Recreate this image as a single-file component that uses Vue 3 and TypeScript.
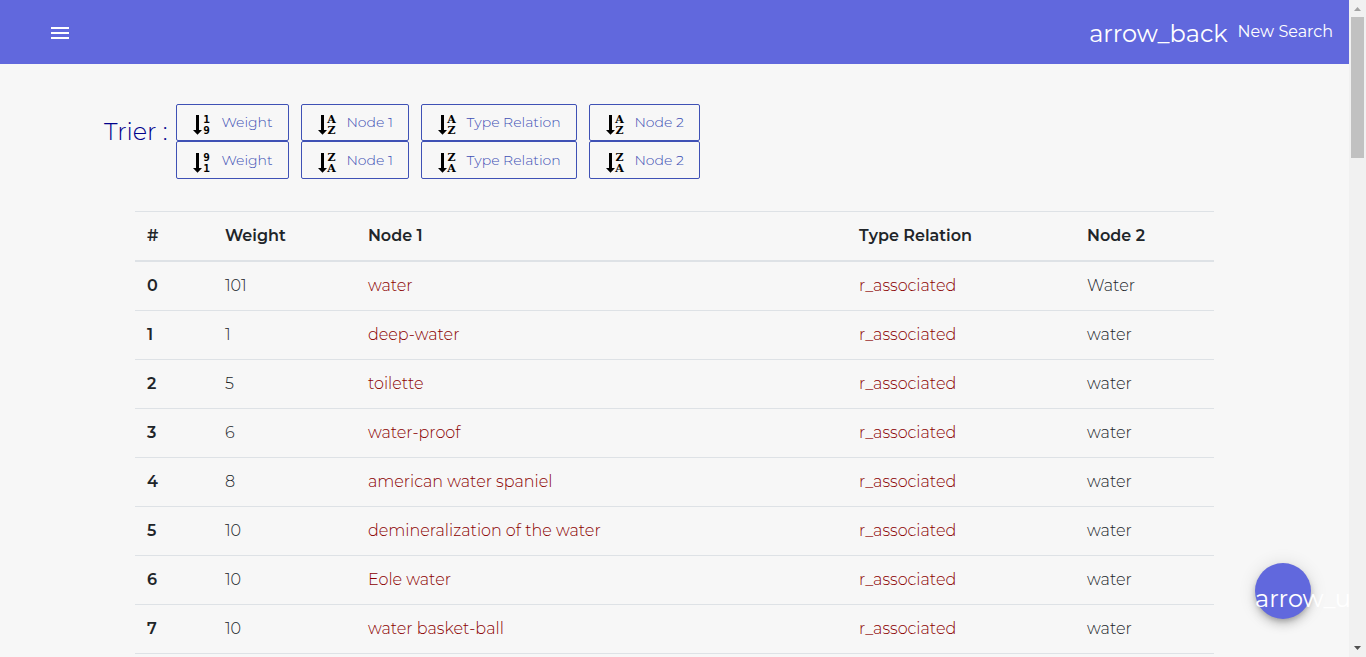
<script setup lang="ts">
interface Row {
  weight: number
  node1: string
  relation: string
  node2: string
}

interface SortButton {
  label: string
  first: string
  second: string
}

const columns: string[] = ['#', 'Weight', 'Node 1', 'Type Relation', 'Node 2']

const sorts: SortButton[] = [
  { label: 'Weight', first: '1', second: '9' },
  { label: 'Node 1', first: 'A', second: 'Z' },
  { label: 'Type Relation', first: 'A', second: 'Z' },
  { label: 'Node 2', first: 'A', second: 'Z' },
  { label: 'Weight', first: '9', second: '1' },
  { label: 'Node 1', first: 'Z', second: 'A' },
  { label: 'Type Relation', first: 'Z', second: 'A' },
  { label: 'Node 2', first: 'Z', second: 'A' },
]

const entries: [number, string, string][] = [
  [101, 'water', 'Water'],
  [1, 'deep-water', 'water'],
  [5, 'toilette', 'water'],
  [6, 'water-proof', 'water'],
  [8, 'american water spaniel', 'water'],
  [10, 'demineralization of the water', 'water'],
  [10, 'Eole water', 'water'],
  [10, 'water basket-ball', 'water'],
]

const rows: Row[] = entries.map(([weight, node1, node2]) => ({
  weight,
  node1,
  relation: 'r_associated',
  node2,
}))
</script>

<template>
  <div class="shell">
    <div class="page">
      <header class="bar">
        <button class="menu" type="button" aria-label="Menu">
          <svg width="24" height="24" viewBox="0 0 24 24" aria-hidden="true">
            <path d="M3 6h18v2H3zM3 11h18v2H3zM3 16h18v2H3z" fill="#fff" />
          </svg>
        </button>
        <a class="back" href="#">
          <span class="back-icon">arrow_back</span>
          <span class="back-label">New Search</span>
        </a>
      </header>

      <main>
        <section class="sorting">
          <h2>Trier :</h2>
          <div class="buttons">
            <button v-for="(s, i) in sorts" :key="i" class="sort" type="button">
              <svg width="18" height="22" viewBox="0 0 18 22" aria-hidden="true">
                <path d="M3 2h3v15h3L4.500 21.700 0 17h3z" />
                <text
                  x="13.500"
                  y="10"
                  :class="s.label === 'Weight' ? 'digit' : 'letter'"
                >{{ s.first }}</text>
                <text
                  x="13.500"
                  y="21"
                  :class="s.label === 'Weight' ? 'digit' : 'letter'"
                >{{ s.second }}</text>
              </svg>
              <span>{{ s.label }}</span>
            </button>
          </div>
        </section>

        <table>
          <thead>
            <tr>
              <th v-for="c in columns" :key="c" scope="col">{{ c }}</th>
            </tr>
          </thead>
          <tbody>
            <tr v-for="(r, i) in rows" :key="i">
              <th scope="row">{{ i }}</th>
              <td>{{ r.weight }}</td>
              <td><a href="#">{{ r.node1 }}</a></td>
              <td><a href="#">{{ r.relation }}</a></td>
              <td>{{ r.node2 }}</td>
            </tr>
          </tbody>
        </table>
      </main>

      <button class="fab" type="button">arrow_upward</button>
    </div>

    <div class="scroll" aria-hidden="true">
      <svg width="17" height="17" viewBox="0 0 17 17"><path d="M5 11h7L8.500 7z" fill="#a3a3a3" /></svg>
      <div class="track"><div class="thumb"></div></div>
      <svg width="17" height="17" viewBox="0 0 17 17"><path d="M5 6h7L8.500 10z" fill="#505050" /></svg>
    </div>
  </div>
</template>

<style>
body {
  margin: 0;
}
</style>

<style scoped>
.shell {
  display: flex;
  height: 100vh;
  overflow: hidden;
  background: #f7f7f7;
  color: #212529;
  font-family: Montserrat, Inter, "Open Sans", sans-serif;
  font-size: 16px;
  font-weight: 300;
  line-height: 24px;
}

.page {
  position: relative;
  flex: 1;
  min-width: 0;
  overflow: hidden;
}

button {
  font: inherit;
  cursor: pointer;
}

a {
  color: #8b0000;
  text-decoration: none;
}

.bar {
  display: flex;
  align-items: center;
  justify-content: space-between;
  height: 64px;
  padding: 0 16px 0 48px;
  background: #6168dd;
}

.menu {
  display: flex;
  padding: 2px 0 0;
  border: 0;
  background: none;
}

.back {
  display: flex;
  align-items: center;
  gap: 10px;
  color: #fff;
  font-weight: 400;
}

.back-icon {
  padding-top: 4px;
  font-size: 24px;
}

.sorting {
  display: flex;
  gap: 9px;
  padding: 40px 0 0 104px;
}

h2 {
  margin: 0;
  padding-top: 12px;
  color: #00008b;
  font-size: 24px;
  font-weight: 300;
  line-height: 32px;
  white-space: nowrap;
}

.buttons {
  display: grid;
  grid-template-columns: 113px 108px 156px 111px;
  grid-template-rows: 37px 38px;
  column-gap: 12px;
}

.sort {
  display: flex;
  align-items: center;
  gap: 10px;
  padding: 0 0 0 16px;
  border: 1px solid #3f51b5;
  border-radius: 2px;
  background: transparent;
  color: #3f51b5;
  font-size: 14px;
  line-height: 21px;
  white-space: nowrap;
}

.sort svg {
  flex: none;
  margin-top: 3px;
  overflow: visible;
}

.sort text {
  fill: #000;
  font-weight: 700;
  text-anchor: middle;
}

.digit {
  font-family: "DejaVu Sans Mono", monospace;
  font-size: 11px;
}

.letter {
  font-family: "DejaVu Serif", "Liberation Serif", serif;
  font-size: 11px;
}

table {
  width: 80%;
  margin: 32px auto 0;
  border-spacing: 0;
  table-layout: fixed;
}

th,
td {
  padding: 12px;
  border-bottom: 1px solid #dee2e6;
  text-align: left;
}

th {
  font-weight: 600;
}

thead th {
  border-top: 1px solid #dee2e6;
  border-bottom-width: 2px;
}

thead th:nth-child(1) {
  width: 54px;
}

thead th:nth-child(2) {
  width: 119px;
}

thead th:nth-child(3) {
  width: auto;
}

thead th:nth-child(4) {
  width: 204px;
}

thead th:nth-child(5) {
  width: 115px;
}

.fab {
  position: absolute;
  right: 38px;
  bottom: 38px;
  width: 56px;
  height: 56px;
  padding: 16px 0 0;
  border: 0;
  border-radius: 50%;
  background: #6168dd;
  box-shadow: 0 3px 5px -1px rgba(0, 0, 0, 0.2), 0 6px 10px rgba(0, 0, 0, 0.14), 0 1px 18px rgba(0, 0, 0, 0.12);
  color: #fff;
  font-size: 24px;
  font-weight: 400;
  text-align: left;
  white-space: nowrap;
}

.scroll {
  display: flex;
  flex: none;
  flex-direction: column;
  width: 17px;
  background: #f1f1f1;
}

.track {
  flex: 1;
  padding: 0 2px;
}

.thumb {
  height: 141px;
  background: #c1c1c1;
}
</style>
